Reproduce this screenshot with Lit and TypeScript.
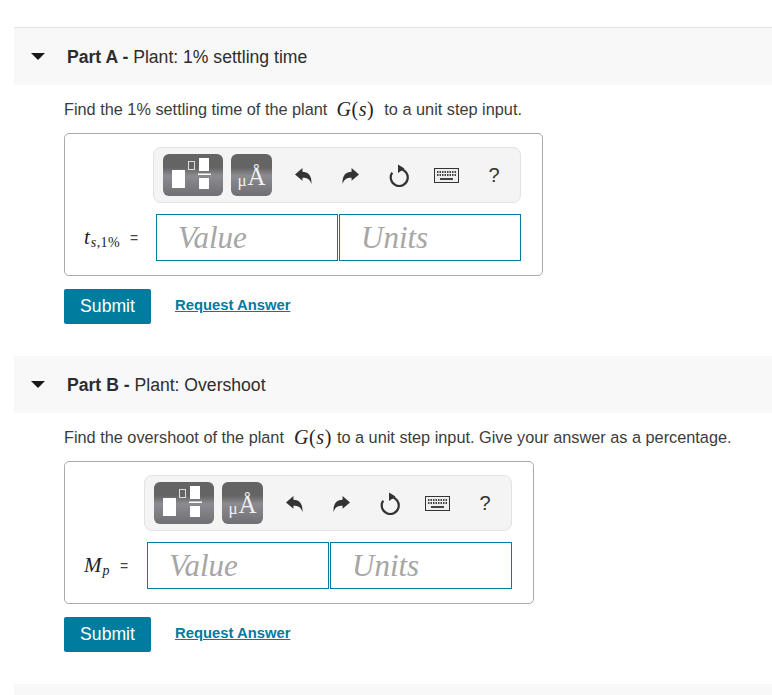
import { LitElement, html, css } from "lit";
import { customElement, property } from "lit/decorators.js";

@customElement("answer-part")
class AnswerPart extends LitElement {
  @property() letter = "";
  @property() heading = "";
  @property() kind = "a";

  static styles = css`
    :host { display: block; font-family: "Liberation Sans", Arial, sans-serif; color: #333; }
    .head { height: 57px; box-sizing: border-box; padding-top: 2px; background: #f8f8f8; display: flex; align-items: center; font-size: 17.6px; color: #2d2d2d; }
    .tri { width: 0; height: 0; margin: -2px 0 0 17px; border-left: 7.5px solid transparent; border-right: 7.5px solid transparent; border-top: 7.5px solid #1a1a1a; }
    .title { margin-left: 21px; padding-left: 1px; }
    .title b { font-weight: bold; }
    .body { margin-left: 50px; }
    .prompt { height: 48px; display: flex; align-items: center; font-size: 16.3px; color: #3c3c3c; white-space: pre; }
    .math { font-family: "Liberation Serif", serif; font-size: 20px; color: #222; letter-spacing: .6px; }
    .a .math { margin: 0 10px 0 9px; }
    .b .math { margin: 0 5px 0 10px; }
    .math i { font-style: italic; }
    .box { height: 141px; border: 1px solid #aaa; border-radius: 5px; display: grid; align-content: start; background: #fff; box-sizing: content-box; }
    .a .box { width: 477px; grid-template-columns: 91px 1fr; }
    .b .box { width: 468px; grid-template-columns: 82px 1fr; }
    .label { grid-row: 2; display: flex; align-items: center; padding-left: 19px; margin-top: 11px; height: 47px; font-family: "Liberation Serif", serif; font-size: 21px; font-style: italic; color: #222; white-space: nowrap; }
    .label sub { font-size: 14px; line-height: 0; position: relative; top: 5px; margin-left: 1px; letter-spacing: .4px; vertical-align: baseline; }
    .label sub span { font-style: normal; }
    .eq { font-style: normal; font-size: 14px; font-family: "Liberation Sans", sans-serif; color: #444; margin-left: 10px; }
    .tools { grid-column: 2; margin: 13px 0 0 -3px; width: 366px; height: 54px; border: 1px solid #e2e2e2; border-radius: 8px; background: #f4f4f4; display: flex; align-items: center; }
    .btn { height: 42px; border-radius: 6px; background: linear-gradient(#646464 0 32%, #8b8b92 52%, #6f6f73 100%); margin-left: 8px; display: flex; align-items: flex-end; justify-content: center; }
    .btn.t { width: 60px; margin-left: 9px; }
    .btn.t svg { display: block; }
    .btn.u { width: 41px; margin-left: 8px; font-family: "Liberation Serif", serif; color: #f0f0f0; font-size: 17px; padding-bottom: 7px; box-sizing: border-box; line-height: 1; }
    .btn.u span { font-size: 25px; margin-left: 1px; line-height: 1; }
    .ico { display: flex; justify-content: center; align-items: center; }
    .q { font-size: 20px; color: #333; }
    .inputs { grid-column: 2; grid-row: 2; margin-top: 11px; display: flex; gap: 1px; }
    .inp { box-sizing: border-box; height: 47px; width: 182px; border: 1px solid #007c9e; display: flex; align-items: center; padding-left: 21px; font-family: "Liberation Serif", serif; font-style: italic; font-size: 31px; color: #a6a6a6; background: #fff; }
    .actions { display: flex; align-items: center; margin-top: 13px; height: 35px; }
    .submit { width: 87px; height: 35px; background: #007c9e; color: #fff; border-radius: 2px; display: flex; align-items: center; justify-content: center; font-size: 17.6px; }
    .link { margin: -4px 0 0 24px; color: #007c9e; font-size: 14.8px; font-weight: bold; text-decoration: underline; }
  `;

  icons() {
    return html`
      <div class="ico" style="width:44px;margin-left:9px"><svg width="17" height="17" viewBox="0 0 16 16"><path d="M0 7 7 1v3.5c5 0 9 3 8.5 11.5C14 11.500 12 10 7 10v3z" fill="#333"/></svg></div>
      <div class="ico" style="width:50px"><svg width="17" height="17" viewBox="0 0 16 16"><path d="M16 7 9 1v3.5C4 4.500 0 7.500.5 16 2 11.500 4 10 9 10v3z" fill="#333"/></svg></div>
      <div class="ico" style="width:47px"><svg width="20" height="24" viewBox="0 0 20 24"><path d="M11 6a8.500 8.500 0 1 1-7.800 3.700" fill="none" stroke="#333" stroke-width="2.200"/><path d="M9 1.500 15.500 5.500 9 10z" fill="#333"/></svg></div>
      <div class="ico" style="width:49px"><svg width="25" height="15" viewBox="0 0 25 15"><rect x=".5" y=".5" width="24" height="14" fill="#eee" stroke="#333"/><path d="M3 4h19M3 7h19" stroke="#444" stroke-width="2" stroke-dasharray="1.500 1"/><path d="M6 11h13" stroke="#444" stroke-width="2"/></svg></div>
      <div class="ico q" style="width:46px">?</div>`;
  }

  render() {
    const isA = this.kind === "a";
    return html`<div class=${this.kind}>
      <div class="head"><span class="tri"></span><span class="title"><b>Part ${this.letter} - </b>${this.heading}</span></div>
      <div class="body">
        ${isA
          ? html`<div class="prompt">Find the 1% settling time of the plant<span class="math"><i>G</i>(<i>s</i>)</span>to a unit step input.</div>`
          : html`<div class="prompt">Find the overshoot of the plant<span class="math"><i>G</i>(<i>s</i>)</span>to a unit step input. Give your answer as a percentage.</div>`}
        <div class="box">
          <div class="tools">
            <div class="btn t"><svg width="60" height="42" viewBox="0 0 60 42"><rect x="9" y="16" width="13" height="18" fill="#fff"/><rect x="25.500" y="7.500" width="6" height="8" fill="none" stroke="#ddd"/><rect x="36" y="4" width="10" height="13" fill="#fff"/><rect x="35" y="19.500" width="13" height="1.500" fill="#fff"/><rect x="36" y="24" width="10" height="11" fill="#fff"/></svg></div>
            <div class="btn u">μ<span>Å</span></div>
            ${this.icons()}
          </div>
          <div class="label">${isA ? html`t<sub>s,<span>1%</span></sub>` : html`M<sub>p</sub>`}<span class="eq">=</span></div>
          <div class="inputs"><div class="inp">Value</div><div class="inp">Units</div></div>
        </div>
        <div class="actions"><div class="submit">Submit</div><div class="link">Request Answer</div></div>
      </div>
    </div>`;
  }
}

@customElement("app-root")
class AppRoot extends LitElement {
  static styles = css`
    :host { display: block; height: 695px; overflow: hidden; background: #fff; }
    .wrap { padding-top: 27px; margin-left: 14px; }
    .rule { height: 1px; background: #e5e5e5; }
    .gap { height: 32px; }
    .next { height: 11px; background: #f8f8f8; }
  `;
  render() {
    return html`<div class="wrap">
      <div class="rule"></div>
      <answer-part kind="a" letter="A" heading="Plant: 1% settling time"></answer-part>
      <div class="gap"></div>
      <answer-part kind="b" letter="B" heading="Plant: Overshoot"></answer-part>
      <div class="gap"></div>
      <div class="next"></div>
    </div>`;
  }
}
